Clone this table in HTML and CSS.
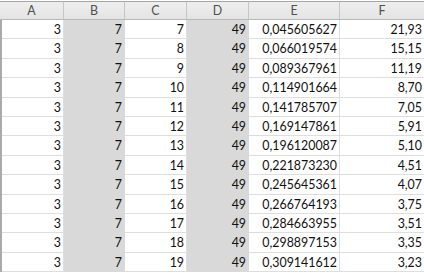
FILE: index.html
```html
<!DOCTYPE html>
<html>
<head>
<meta charset="utf-8">
<link rel="stylesheet" href="styles.css">
</head>
<body>
<div class="sheet">
  <div class="hd">A</div><div class="hd">B</div><div class="hd">C</div><div class="hd">D</div><div class="hd">E</div><div class="hd last">F</div>

  <div class="c">3</div><div class="c sel">7</div><div class="c">7</div><div class="c sel">49</div><div class="c">0,045605627</div><div class="c">21,93</div>
  <div class="c">3</div><div class="c sel">7</div><div class="c">8</div><div class="c sel">49</div><div class="c">0,066019574</div><div class="c">15,15</div>
  <div class="c">3</div><div class="c sel">7</div><div class="c">9</div><div class="c sel">49</div><div class="c">0,089367961</div><div class="c">11,19</div>
  <div class="c">3</div><div class="c sel">7</div><div class="c">10</div><div class="c sel">49</div><div class="c">0,114901664</div><div class="c">8,70</div>
  <div class="c">3</div><div class="c sel">7</div><div class="c">11</div><div class="c sel">49</div><div class="c">0,141785707</div><div class="c">7,05</div>
  <div class="c">3</div><div class="c sel">7</div><div class="c">12</div><div class="c sel">49</div><div class="c">0,169147861</div><div class="c">5,91</div>
  <div class="c">3</div><div class="c sel">7</div><div class="c">13</div><div class="c sel">49</div><div class="c">0,196120087</div><div class="c">5,10</div>
  <div class="c">3</div><div class="c sel">7</div><div class="c">14</div><div class="c sel">49</div><div class="c">0,221873230</div><div class="c">4,51</div>
  <div class="c">3</div><div class="c sel">7</div><div class="c">15</div><div class="c sel">49</div><div class="c">0,245645361</div><div class="c">4,07</div>
  <div class="c">3</div><div class="c sel">7</div><div class="c">16</div><div class="c sel">49</div><div class="c">0,266764193</div><div class="c">3,75</div>
  <div class="c">3</div><div class="c sel">7</div><div class="c">17</div><div class="c sel">49</div><div class="c">0,284663955</div><div class="c">3,51</div>
  <div class="c">3</div><div class="c sel">7</div><div class="c">18</div><div class="c sel">49</div><div class="c">0,298897153</div><div class="c">3,35</div>
  <div class="c">3</div><div class="c sel">7</div><div class="c">19</div><div class="c sel">49</div><div class="c">0,309141612</div><div class="c">3,23</div>
</div>
</body>
</html>
```
FILE: styles.css
```css
html, body {
  margin: 0;
  padding: 0;
  background: #ffffff;
}
body {
  padding-top: 1px;
  font-family: Lato, "Liberation Sans", Arial, sans-serif;
  font-size: 12.4px;
  color: #111111;
  overflow: hidden;
  height: 274px;
  box-sizing: border-box;
}
.sheet {
  display: grid;
  grid-template-columns: 62px 61px 62px 62px 91px 85px;
  grid-template-rows: 19px;
  grid-auto-rows: 19.4px;
  border-left: 2px solid #a9a9a9;
  width: 423px;
  box-sizing: border-box;
}
.hd {
  box-sizing: border-box;
  background: linear-gradient(#eeeeee, #e4e4e4);
  border-top: 1px solid #a6a6a6;
  border-bottom: 1px solid #b8b8b8;
  border-right: 1px solid #c6c6c6;
  color: #505050;
  text-align: center;
  line-height: 18px;
  font-size: 12.4px;
}
.sheet .hd:first-child {
  margin-left: -2px;
}
.c {
  box-sizing: border-box;
  border-bottom: 1px solid #dedede;
  border-right: 1px solid #dedede;
  text-align: right;
  padding-right: 2px;
  line-height: 20px;
  white-space: nowrap;
}
.c.sel {
  background: #d9d9d9;
  border-bottom-color: #d9d9d9;
  border-right-color: #d9d9d9;
}
```
